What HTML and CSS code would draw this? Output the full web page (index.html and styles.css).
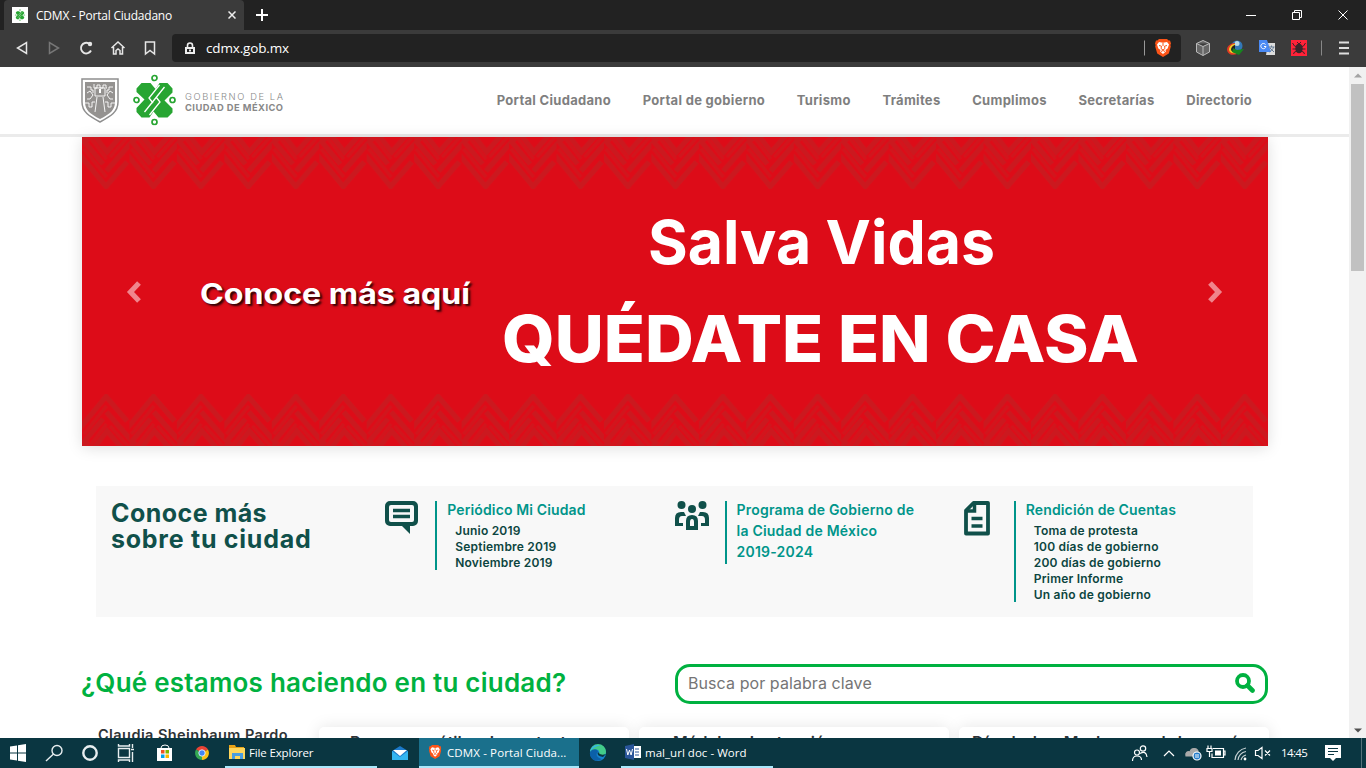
FILE: index.html
```html
<!DOCTYPE html>
<html lang="es">
<head>
<meta charset="utf-8">
<title>CDMX - Portal Ciudadano</title>
<link rel="stylesheet" href="styles.css">
</head>
<body>
<svg width="0" height="0" class="defs">
  <defs>
    <symbol id="brave" viewBox="0 0 16 18"><path fill="#fb5418" d="M4 0h8l1.600 1.600 1.400-.2 1 3-.6 1.600.4 1.500-2 7L8 18l-5.800-3.500-2-7L.6 6 0 4.400l1-3 1.400.2z"/><path fill="#fff" d="M4 3l4 .8L12 3l2 2.500-1.400 4-2.100 1.600.4 1.400L8 15l-2.900-2.500.4-1.400-2.100-1.600L2 5.500z"/><path fill="none" stroke="#fb5418" d="M4 6.500l2.500.7L6 9.500l2 1.500 2-1.500-.5-2.300 2.500-.7M8 4v3M6 12.500l2-1 2 1"/></symbol>
    <symbol id="knot" viewBox="0 0 44 52">
      <g fill="none" stroke="#27a532" stroke-width="1.700"><circle cx="22" cy="4.500" r="2.500"/><circle cx="22" cy="48.500" r="2.500"/><circle cx="4" cy="26.500" r="2.500"/><circle cx="40" cy="26.500" r="2.500"/></g>
      <path fill="#27a532" d="M9 9.500h9l5 6 4-6h8l5 5.500v4L32 27l8 8v4l-5 5h-9l-5-6-4 6H9l-5-5.500v-4L12 26 4 18.500V15z"/>
      <path fill="none" stroke="#fff" stroke-width="1.300" d="M32 13.500L12 38.500M27 11.500L16.500 24.500l4 5M17 41.500l10.500-13-4-5"/>
    </symbol>
  </defs>
</svg>
<div class="screen">
  <div class="tabstrip">
    <div class="tab">
      <svg class="favicon" viewBox="0 0 16 16"><path fill="#fff" d="M0 0h16v16H0z"/><use href="#knot" x="2" y="2" width="12" height="12"/></svg>
      <span class="tab-title">CDMX - Portal Ciudadano</span>
      <svg class="tab-close" viewBox="0 0 8 8"><path d="M.5.5l7 7m0-7l-7 7" stroke="#eee" stroke-width="1.500"/></svg>
    </div>
    <svg class="tab-new" viewBox="0 0 12 12"><path d="M6 0v12M0 6h12" stroke="#fff" stroke-width="2"/></svg>
    <svg class="wincontrols" viewBox="0 0 104 12" fill="none" stroke="#fff"><path d="M0 6.500h10M46.500 3.500h7v7h-7zM48.500 3V1.500h7v7H54M92.500 1.500l9 9m0-9l-9 9"/></svg>
  </div>
  <div class="toolbar">
    <svg class="navicons" viewBox="0 0 144 18" fill="none" stroke="#e6e6e6" stroke-width="1.500">
      <path d="M10.500 3.500v11L1.500 9z"/><path stroke="#777" d="M33.500 3.500v11l9-5.500z"/>
      <path d="M75 11.500A5.300 5.300 0 1 1 73 4.600" stroke-width="1.900"/><circle cx="74" cy="5" r="2.200" fill="#e6e6e6" stroke="none"/>
      <path d="M95.500 9L102 3l6.500 6M97.500 8v7H100v-3.500l2-1.500 2 1.500V15h2.500V8"/>
      <path d="M129.500 3h9v12L134 11.500 129.500 15z"/>
    </svg>
    <div class="address">
      <svg class="lock" viewBox="0 0 10 12"><path d="M2.500 5V3.500a2.500 2.500 0 0 1 5 0V5" fill="none" stroke="#eee" stroke-width="1.600"/><path d="M0 5h10v7H0z" fill="#eee"/><path d="M2 7h6v3H2z" fill="#222"/><path d="M4 7.500h2v2H4z" fill="#eee"/></svg>
      <span class="url">cdmx.gob.mx</span>
      <svg class="shield" viewBox="0 0 28 18"><path d="M.5 1.500v15" stroke="#999"/><use href="#brave" x="11" y="0" width="16" height="18"/></svg>
    </div>
    <svg class="extensions" viewBox="0 0 156 18">
      <g fill="#666" stroke="#bbb"><path d="M8 1.500l6.500 3v8.500L8 16.500 1.500 13V4.500zM1.500 4.500L8 7.500l6.500-3M8 7.500v9"/></g>
      <circle cx="42" cy="7" r="5.500" fill="#3278b8"/><circle cx="42" cy="4.500" r="2.500" fill="#b9d9e8"/><path d="M32 10c1-5 6-6 8-6l-2 6 4 5c-5 2-10 0-10-5z" fill="#e03a22"/><path d="M34 10c1-4 4-5 6-5l-1 6 3 3c-4 1-8 0-8-4z" fill="#f0d02a"/><path d="M36 10c1-3 3-4 4-4v5l2 2c-3 1-6 0-6-3z" fill="#222"/><path d="M38 9l4 2 7-1-5 6-7-3z" fill="#17851f"/>
      <path d="M73 4h7v12h-9z" fill="#dcdcdc"/><path d="M64 1h8l4 12H64z" fill="#4a8af4"/><path d="M70.500 5.500a2.600 2.600 0 1 0 .5 2H69" fill="none" stroke="#fff"/><path d="M73.500 8h6M76.500 6.500V8M78.500 8c0 2-3 4-4 5M75 9l4 4" fill="none" stroke="#647b94"/>
      <path d="M96 1h16v16H96z" fill="#ff2238"/><ellipse cx="104" cy="9.500" rx="3.700" ry="4.800" fill="#39252a"/><path d="M97.500 4l2 3 3 1M110.500 4l-2 3-3 1M97.500 10h13M98.500 15l1-2 3-1M109.500 15l-1-2-3-1M102 3l2 2 2-2" fill="none" stroke="#39252a"/>
      <path d="M126.500 1.500v15" stroke="#888"/><path d="M144 3.500h10M144 9h10M144 14.500h10" stroke="#ddd" stroke-width="1.800"/>
    </svg>
  </div>

  <div class="viewport">
    <div class="page">
      <header class="site-header">
        <svg class="logo" viewBox="0 0 210 60">
          <path d="M2 9h36v23c0 10-7 14-18 20C9 46 2 42 2 32z" fill="#fff" stroke="#8f8f8f" stroke-width="1.500"/>
          <path d="M5 12h30v20c0 8-5 12-15 17C10 44 5 40 5 32z" fill="#949290"/>
          <path d="M14 14v4h3v-3h3v3h3v-3h3v3h1M15 18h10v8H15zM7 17h4v3h2v3M33 17h-4v3h-2v3M7 23l3-2 3 4-3 4H7M33 23l-3-2-3 4 3 4h3M5 33h4v4h3v-5h3M35 33h-4v4h-3v-5h-3M17 27l-2 15M23 27l2 15" fill="none" stroke="#fff" stroke-width=".9"/>
          <path d="M19 19h2v4h-2z" fill="#fff"/>
          <use href="#knot" x="52.500" y="3.500" width="44" height="52"/>
          <text x="105" y="30" class="logo-light" textLength="98">GOBIERNO DE LA</text>
          <text x="105" y="41" class="logo-bold" textLength="98">CIUDAD DE MÉXICO</text>
        </svg>
        <nav class="site-nav">
          <a>Portal Ciudadano</a><a>Portal de gobierno</a><a>Turismo</a><a>Trámites</a><a>Cumplimos</a><a>Secretarías</a><a>Directorio</a>
        </nav>
      </header>
      <section class="banner">
        <svg class="banner-art" viewBox="0 0 1186 309">
          <defs>
            <pattern id="zig" width="47.450" height="52" patternUnits="userSpaceOnUse">
              <path d="M-2 18L24 49.500 45 25M1 3l20 24M24.500 34L49 6M8-7l17 22L46-9M-2-4l8 9" fill="none" stroke="#cb191f" stroke-width="5"/>
              <path d="M24.500 40L2 12M24.500 22L6-2M28 20L46 0" fill="none" stroke="#d1161d" stroke-width="3"/>
            </pattern>
          </defs>
          <rect width="1186" height="52" fill="url(#zig)"/>
          <g transform="translate(0 309) scale(1 -1)"><rect width="1186" height="52" fill="url(#zig)"/></g>
          <path d="M57 146l-8.500 9L57 164M1128 146l8.500 9-8.500 9" fill="none" stroke="#f0858c" stroke-width="5.200"/>
          <text class="cta" x="118" y="167" textLength="270" lengthAdjust="spacingAndGlyphs">Conoce más aquí</text>
          <text class="slogan" x="566" y="127" textLength="347" lengthAdjust="spacingAndGlyphs">Salva Vidas</text>
          <text class="slogan-strong" x="420" y="224.500" textLength="637" lengthAdjust="spacingAndGlyphs">QUÉDATE EN CASA</text>
        </svg>
      </section>
      <section class="know">
        <h2 class="know-title"><span class="line1">Conoce más</span><br>sobre tu ciudad</h2>
        <div class="topic">
          <svg class="topic-icon" viewBox="0 0 34 36"><path d="M5 0h23a5 5 0 0 1 5 5v15a5 5 0 0 1-5 5h-3v8l-8-8H5a5 5 0 0 1-5-5V5a5 5 0 0 1 5-5z" fill="#10504a"/><rect x="4" y="4" width="25" height="17" rx="2" fill="#f8f8f8"/><path d="M8 9.500h17M8 15.500h17" stroke="#10504a" stroke-width="3.500"/></svg>
          <div class="topic-body"><h3>Periódico Mi Ciudad</h3><ul><li>Junio 2019</li><li>Septiembre 2019</li><li>Noviembre 2019</li></ul></div>
        </div>
        <div class="topic">
          <svg class="topic-icon" viewBox="0 0 34 36" fill="#10504a"><circle cx="6.500" cy="4" r="4"/><circle cx="27.500" cy="4" r="4"/><circle cx="17" cy="8" r="4"/><path d="M0 25v-8q0-6 6-6h3l2 4H7q-3 0-3 4v3h4v3zM34 25v-8q0-6-6-6h-3l-2 4h4q3 0 3 4v3h-4v3zM11 29v-9q0-6 6-6t6 6v9z"/><path d="M15 25v-4q0-3 2-3t2 3v4z" fill="#f8f8f8"/></svg>
          <div class="topic-body program"><h3>Programa de Gobierno de<br>la Ciudad de México<br>2019-2024</h3></div>
        </div>
        <div class="topic">
          <svg class="topic-icon" viewBox="0 0 34 36"><path d="M9.500 2h14.500v30.500H2V9.500z" fill="none" stroke="#10504a" stroke-width="3.800" stroke-linejoin="round"/><path d="M10.500 2v8H2M7.500 17.500h11M7.500 25h11" fill="none" stroke="#10504a" stroke-width="3.500"/></svg>
          <div class="topic-body"><h3>Rendición de Cuentas</h3><ul><li>Toma de protesta</li><li>100 días de gobierno</li><li>200 días de gobierno</li><li>Primer Informe</li><li>Un año de gobierno</li></ul></div>
        </div>
      </section>
      <section class="doing">
        <h2 class="doing-title">¿Qué estamos haciendo en tu ciudad?</h2>
        <div class="search"><span>Busca por palabra clave</span>
          <svg class="search-icon" viewBox="0 0 20 20"><circle cx="8" cy="8" r="6" fill="none" stroke="#00b140" stroke-width="3.800"/><path d="M12.500 12.500l5 5" stroke="#00b140" stroke-width="4.600" stroke-linecap="round"/></svg>
        </div>
      </section>
      <section class="feed">
        <div class="author">Claudia Sheinbaum Pardo</div>
        <div class="card">Programas útiles de contacto</div>
        <div class="card">Módulos de atención</div>
        <div class="card">Día de las Madres, celebra así</div>
      </section>
    </div>
    <div class="scrollbar">
      <svg viewBox="0 0 8 5"><path d="M0 4.500L4 .5l4 4z" fill="#a3a3a3"/></svg>
      <div class="thumb"></div>
      <svg viewBox="0 0 8 5"><path d="M0 .5l4 4 4-4z" fill="#505050"/></svg>
    </div>
  </div>

  <footer class="taskbar">
    <svg class="launchers" viewBox="0 0 225 30">
      <path fill="#fff" d="M10 8.500l7-1v7h-7zM18 7.300l8-1.200v8.400h-8zM10 15.500h7v7l-7-1zM18 15.500h8v8.400l-8-1.200z"/>
      <g fill="none" stroke="#e8eef0" stroke-width="1.400"><circle cx="57" cy="12.500" r="5"/><path d="M53.500 16L46 23"/><circle cx="90" cy="15" r="6.700" stroke-width="2.400"/><path d="M118.500 10.500h11v9h-11zM118.500 6v2h11V6M118.500 24v-2h11v2M132.500 6v4M132.500 14v10M131 11.500h3"/></g>
      <path d="M157 10h15v13h-15z" fill="#fff"/><path d="M161 10q0-3 4-3t4 3" fill="none" stroke="#fff"/><path d="M161 12h3.500v3.500H161z" fill="#ef5425"/><path d="M165.500 12h3.500v3.500h-3.500z" fill="#80b900"/><path d="M161 16.500h3.500V20H161z" fill="#00a3ee"/><path d="M165.500 16.500h3.500V20h-3.500z" fill="#fdb900"/>
      <path d="M202 15L196 11.500a7 7 0 0 1 12 0z" fill="#ea4335"/><path d="M202 15l6-3.500A7 7 0 0 1 202 22z" fill="#fbc116"/><path d="M202 15v7A7 7 0 0 1 196 11.500z" fill="#34a853"/><circle cx="202" cy="15" r="3.200" fill="#4286f5" stroke="#fff" stroke-width=".8"/>
    </svg>
    <div class="task"><svg class="task-icon" viewBox="0 0 16 16"><path d="M0 1h6l1 2h8v12H0z" fill="#e8a317"/><path d="M0 4h16v11H0z" fill="#ffd65c"/><path d="M3 15V9h11v6h-3v-3H6v3z" fill="#4a9de0"/></svg><span class="t-explorer">File Explorer</span></div>
    <svg class="mail" viewBox="0 0 42 30"><path d="M15 13l8-5 8 5v9H15z" fill="#1c79c9"/><path d="M16 12h14l-7 6z" fill="#fff"/><path d="M15 22v-9l8 6 8-6v9z" fill="#33b5ef"/></svg>
    <div class="task active"><svg class="task-icon" viewBox="0 0 16 18"><use href="#brave" width="14" height="18"/></svg><span class="t-cdmx">CDMX - Portal Ciuda...</span></div>
    <svg class="edge" viewBox="0 0 42 30"><circle cx="19" cy="15" r="8" fill="#1683cf"/><path d="M11 14a8 8 0 0 1 16 0c0 4-5 4-7 2 2-4-4-7-9-2z" fill="#42cc89"/><path d="M11 14a8 8 0 0 1 11-6.500q-7 0-11 6.500z" fill="#37b5e8"/><path d="M11 14c3-4 8-3 8 0-3 2-1 6 4 7-8 5-13-2-12-7z" fill="#0b60a9"/><path d="M19 14q-2 4 5 5l3-3q-6 2-8-2z" fill="#0a3641"/></svg>
    <div class="task"><svg class="task-icon" viewBox="0 0 16 16"><path d="M7 2h9v12H7z" fill="#fff"/><path d="M10 5h4M10 8h4M10 11h4" stroke="#295599"/><path d="M0 2l9-2v16l-9-2z" fill="#295599"/><path d="M1.500 5l1.300 6L4.500 6l1.600 5 1.400-6" fill="none" stroke="#fff"/></svg><span class="t-word">mal_url doc - Word</span></div>
    <svg class="tray" viewBox="0 0 145 30" fill="none" stroke="#fff" stroke-width="1.200">
      <circle cx="12" cy="10.500" r="2.700"/><circle cx="6" cy="14.500" r="2.500"/><path d="M1.500 23q0-5 4.500-5t4.500 4M9 15.500q6-3.500 7 3.500M33 18l5-5 5 5"/>
      <path d="M55 18c-1-4 2-5 4-4 1-5 8-4 8 0l1 4z" fill="#aaa" stroke="#aaa"/><circle cx="66" cy="18" r="4" fill="#237bc9"/><path d="M64 17h4m0 2h-4" stroke-width="1"/>
      <path d="M82 10.500h10.500v9H81v-4M92.500 13h1.500v4h-1.500M80 11V7.500M77 7.500V11M76 10.500h5v3h-5zM78.500 14v5"/><path d="M84 12.500h6v5h-6z" fill="#fff" stroke="none"/>
      <path d="M104 22a13 13 0 0 1 11-12M107 22a10 10 0 0 1 8-8.500M110 22a7 7 0 0 1 5-5" stroke="#c5d0d3"/><circle cx="114" cy="21" r="1.400" fill="#fff" stroke="none"/>
      <path d="M124.500 12.500h2.500l4-3v11l-4-3h-2.500zM134 12.500l5 5m0-5l-5 5"/>
    </svg>
    <span class="clock">14:45</span>
    <svg class="action" viewBox="0 0 42 30"><path d="M0 7h16v13h-5l-3 3-3-3H0z" fill="#fff"/><path d="M3 10.500h10M3 13.500h10M3 16.500h6" stroke="#0a3641"/><path d="M36.500 0v30" stroke="#54727a"/></svg>
  </footer>
</div>
</body>
</html>
```
FILE: styles.css
```css
* { box-sizing: border-box; }
body { margin: 0; font-family: Inter, "Liberation Sans", sans-serif; background: #fff; }
h2, h3, ul { margin: 0; padding: 0; }
svg { flex: none; display: block; }
.defs { position: absolute; }
.screen { width: 1366px; height: 768px; overflow: hidden; display: flex; flex-direction: column; }

/* Browser chrome */
.tabstrip { height: 30px; flex: none; background: #222; display: flex; align-items: center; padding-left: 4px; font-family: "Open Sans", sans-serif; }
.tab { width: 240px; height: 30px; background: #3b3b3b; border-radius: 4px 4px 0 0; display: flex; align-items: center; padding: 0 8px; color: #fff; }
.favicon { width: 16px; height: 16px; }
.tab-title { margin-left: 8px; flex: 1; font-size: 12px; letter-spacing: -.22px; white-space: nowrap; }
.tab-close { width: 8px; height: 8px; }
.tab-new { width: 12px; height: 12px; margin-left: 12px; }
.wincontrols { width: 104px; height: 12px; margin-left: auto; margin-right: 16px; }
.toolbar { height: 37px; flex: none; background: #3b3b3b; display: flex; align-items: center; padding: 0 0 1px 16px; font-family: "Open Sans", sans-serif; }
.navicons { width: 144px; height: 18px; }
.address { width: 1009px; height: 28px; margin-left: 12px; background: #222; border-radius: 4px; display: flex; align-items: center; padding: 0 9px 0 13px; color: #fff; }
.lock { width: 10px; height: 12px; }
.url { margin-left: 11px; font-size: 13.5px; letter-spacing: -.15px; flex: 1; }
.shield { width: 28px; height: 18px; }
.extensions { width: 156px; height: 18px; margin-left: 14px; }

/* Web page */
.viewport { height: 671px; flex: none; display: flex; overflow: hidden; }
.page { width: 1349px; height: 671px; overflow: hidden; }
.site-header { height: 70px; border-bottom: 3px solid #ebebeb; display: flex; padding: 0 97px 0 80px; justify-content: space-between; align-items: center; }
.logo { width: 210px; height: 60px; margin-top: -1px; }
.logo-light { font-size: 9.300px; fill: #888; font-weight: 300; }
.logo-bold { font-size: 9.300px; fill: #888; font-weight: 700; }
.site-nav { display: flex; gap: 31.700px; color: #7f7f7f; font-size: 13px; font-weight: 700; letter-spacing: .3px; white-space: nowrap; margin-top: -1px; }
.banner { margin-left: 82px; width: 1186px; height: 309px; background: #dd0c18; box-shadow: 0 2px 14px rgba(0,0,0,.13); }
.banner-art { width: 1186px; height: 309px; }
.banner-art text { fill: #fff; }
.cta { font-size: 29px; font-weight: 700; text-shadow: 2px 2px 2px rgba(0,0,0,.8); }
.slogan { font-size: 61px; font-weight: 650; }
.slogan-strong { font-size: 64px; font-weight: 800; }
.know { margin: 40px 0 0 96px; width: 1157px; height: 131px; background: #f8f8f8; display: grid; grid-template-columns: repeat(4, 289.250px); padding-top: 15px; color: #10504a; }
.know-title { padding: 0 0 0 15px; font-size: 25px; line-height: 26px; font-weight: 650; letter-spacing: .75px; margin-top: -1px; white-space: nowrap; }
.line1 { letter-spacing: .45px; }
.topic { display: flex; align-items: flex-start; }
.topic-icon { width: 34px; height: 36px; }
.topic-body { margin-left: 16px; padding-left: 10px; border-left: 2px solid #00958a; width: 210px; }
.topic h3 { color: #00958a; font-size: 14px; line-height: 21px; font-weight: 600; letter-spacing: .13px; margin-top: -2px; padding-bottom: 3px; white-space: nowrap; }
.program h3 { padding-bottom: 2px; letter-spacing: .22px; }
.topic ul { list-style: none; padding-left: 8px; font-size: 12px; line-height: 16px; font-weight: 600; letter-spacing: .21px; color: #0c4540; margin-bottom: -1px; }
.doing { margin: 47px 0 0 81px; width: 1187px; height: 40px; display: flex; justify-content: space-between; align-items: center; }
.doing-title { color: #00b140; font-size: 26px; line-height: 32px; font-weight: 600; letter-spacing: .22px; white-space: nowrap; margin-top: -3px; }
.search { width: 593px; height: 40px; border: 3px solid #00b140; border-radius: 15px; display: flex; justify-content: space-between; align-items: center; padding: 0 10px 2px; color: #757575; font-size: 16px; letter-spacing: .08px; }
.search-icon { width: 20px; height: 20px; margin-top: -1px; }
.feed { margin: 23px 0 0 82px; display: flex; color: #2f3437; font-weight: 600; white-space: nowrap; }
.author { width: 237px; padding-left: 16px; font-size: 14.500px; line-height: 16px; letter-spacing: .43px; }
.card { width: 310px; height: 100px; margin-right: 10px; padding: 5px 0 0 31px; border-radius: 5px; background: #fff; box-shadow: 0 0 16px rgba(0,0,0,.1); font-size: 16px; line-height: 20px; }
.card:nth-child(3) { padding-left: 34px; }
.card:last-child { padding-left: 13px; margin-right: 0; letter-spacing: 1.2px; }
.scrollbar { width: 17px; background: #f1f1f1; display: flex; flex-direction: column; align-items: center; padding: 6px 0 5px; }
.scrollbar svg { width: 8px; height: 5px; }
.thumb { width: 13px; height: 187px; background: #c1c1c1; margin: 6px 0 auto; }

/* Taskbar */
.taskbar { height: 30px; flex: none; background: #0a3641; display: flex; color: #fff; font-family: "Open Sans", sans-serif; font-size: 11.500px; }
.launchers { width: 225px; height: 30px; }
.task { width: 152px; height: 30px; border-bottom: 2px solid #a9e8fb; display: flex; align-items: center; padding-left: 4px; white-space: nowrap; }
.task.active { width: 160px; background: #1a708c; padding-left: 9px; }
.task-icon { width: 16px; height: 16px; }
.task span { margin-left: 4px; letter-spacing: -.15px; }
.task.active span { margin-left: 3px; letter-spacing: .12px; }
.task .t-word { letter-spacing: .03px; }
.mail, .edge { width: 42px; height: 30px; }
.tray { width: 145px; height: 30px; margin-left: auto; margin-right: 0; }
.clock { width: 49px; padding-left: 5px; line-height: 30px; letter-spacing: -.6px; }
.action { width: 42px; height: 30px; margin-right: -1px; }
```
